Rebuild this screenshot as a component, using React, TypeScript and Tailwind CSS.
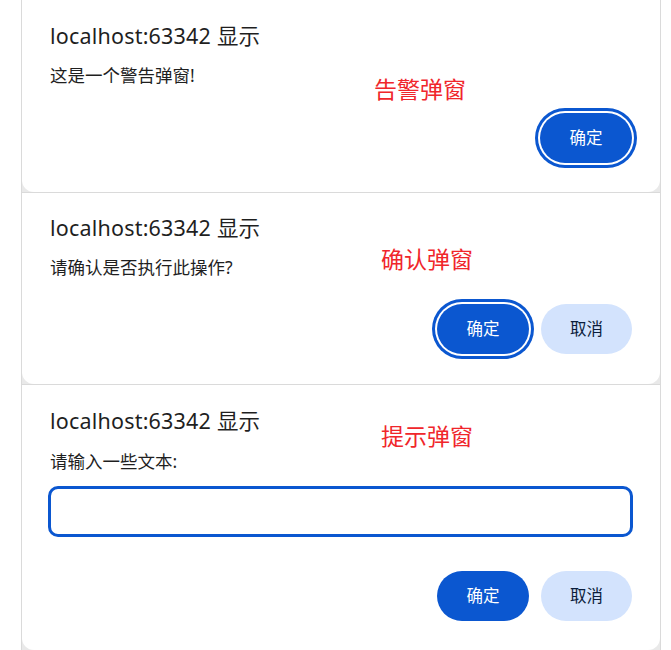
import React from 'react';

const font = { fontFamily: '"Noto Sans", "Noto Sans CJK SC", sans-serif' };

function OkButton({ focused }: { focused?: boolean }) {
  return (
    <button
      className={
        'h-[50px] w-[92px] rounded-full bg-[#0b57d0] text-[16.5px] text-white ' +
        (focused ? 'ring-3 ring-[#0b57d0] ring-offset-2 ring-offset-white' : '')
      }
    >
      确定
    </button>
  );
}

function CancelButton() {
  return (
    <button className="h-[50px] w-[91px] rounded-full bg-[#d3e3fd] text-[16.5px] text-[#0b1d3b]">
      取消
    </button>
  );
}

function Panel({
  children,
  className,
}: {
  children: React.ReactNode;
  className?: string;
}) {
  return (
    <div className={'relative border-x border-[#dadada] bg-[#e9e9e9] ' + (className ?? '')}>
      <div className="relative h-full rounded-b-[12px] bg-white px-[28px]">{children}</div>
    </div>
  );
}

export default function App() {
  return (
    <div className="min-h-[650px] w-[671px] bg-white pl-[21px]" style={font}>
      <div className="w-[640px] text-[#1f1f1f]">
        {/* 告警 */}
        <Panel className="h-[192px]">
          <div className="pt-[22px] text-[21.5px] leading-[28px] tracking-[0.2px]">localhost:63342 显示</div>
          <div className="mt-[13px] text-[17.5px] leading-[24px]">这是一个警告弹窗!</div>
          <div className="mt-[26px] flex justify-end">
            <OkButton focused />
          </div>
          <div className="absolute left-[352px] top-[74px] text-[23px] leading-[30px] text-[#f0262b]">
            告警弹窗
          </div>
        </Panel>

        {/* 确认 */}
        <Panel className="h-[192px] border-t">
          <div className="pt-[21px] text-[21.5px] leading-[28px] tracking-[0.2px]">localhost:63342 显示</div>
          <div className="mt-[13px] text-[17.5px] leading-[24px]">请确认是否执行此操作?</div>
          <div className="mt-[25px] flex justify-end gap-[12px]">
            <OkButton focused />
            <CancelButton />
          </div>
          <div className="absolute left-[359px] top-[51px] text-[23px] leading-[30px] text-[#f0262b]">
            确认弹窗
          </div>
        </Panel>

        {/* 提示 */}
        <Panel className="h-[266px] border-t">
          <div className="pt-[22px] text-[21.5px] leading-[28px] tracking-[0.2px]">localhost:63342 显示</div>
          <div className="mt-[14px] text-[17.5px] leading-[24px]">请输入一些文本:</div>
          <input
            className="-ml-[2px] mt-[13px] block h-[51px] w-[calc(100%+3px)] rounded-[10px] border-[3px] border-[#0b57d0] bg-white px-3 outline-none"
            defaultValue=""
          />
          <div className="mt-[34px] flex justify-end gap-[12px]">
            <OkButton />
            <CancelButton />
          </div>
          <div className="absolute left-[359px] top-[36px] text-[23px] leading-[30px] text-[#f0262b]">
            提示弹窗
          </div>
        </Panel>
      </div>
    </div>
  );
}
